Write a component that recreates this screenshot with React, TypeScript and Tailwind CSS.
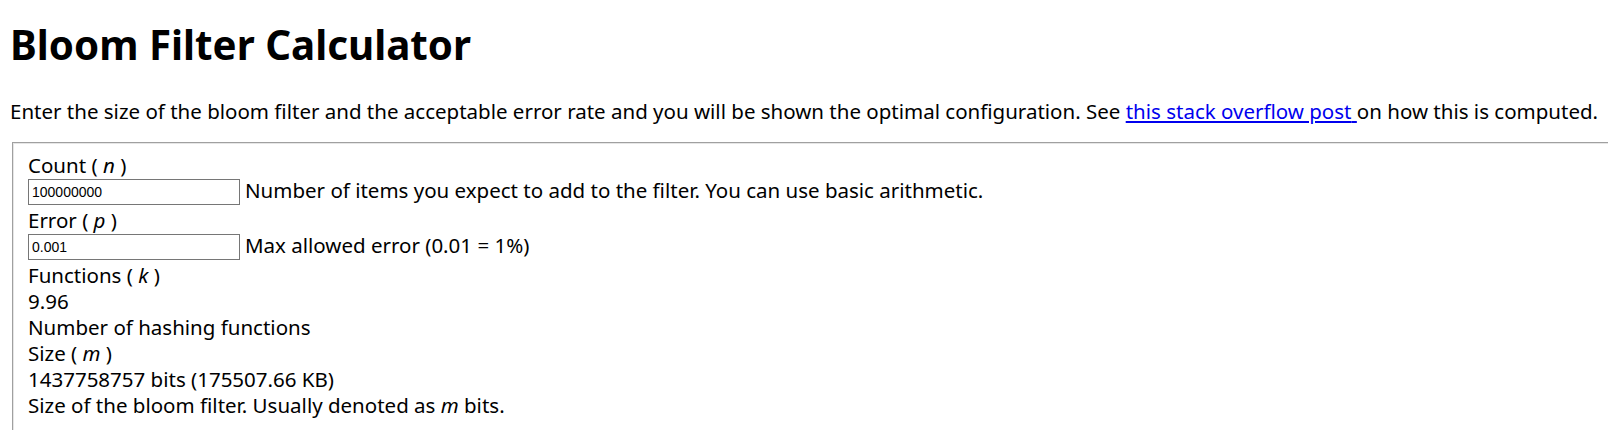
import React from "react";

function Label({ name, v }: { name: string; v: string }) {
  return (
    <div className="h-[26px] leading-[26px] whitespace-pre">
      {name} ( <i>{v}</i> )
    </div>
  );
}

function InputRow({ value, desc }: { value: string; desc: string }) {
  return (
    <div className="flex items-start h-[29px]">
      <input
        type="text"
        defaultValue={value}
        className="mt-[1px] w-[212px] h-[26px] border border-[#767676] bg-white px-[3px] text-[14px] text-black font-['Liberation_Sans',Arial,sans-serif] outline-none"
      />
      <span className="ml-[5px] leading-[25px] whitespace-nowrap">{desc}</span>
    </div>
  );
}

export default function App() {
  return (
    <div className="h-[430px] overflow-hidden bg-white text-black font-['Noto_Sans',sans-serif]">
      <h1 className="ml-[10px] mt-[21px] text-[40.3px] leading-[48px] font-bold">
        Bloom Filter Calculator
      </h1>
      <p className="ml-[10px] mt-[29px] text-[20.5px] leading-[26px] whitespace-nowrap">
        Enter the size of the bloom filter and the acceptable error rate and you will be shown the optimal
        configuration. See{" "}
        <a href="#" className="text-[#0000ee] underline">
          this stack overflow post{" "}
        </a>
        on how this is computed.
      </p>
      <div className="ml-[12px] mr-[-40px] mt-[18px] border border-[#a0a0a0]">
        <div className="border border-[#e6e6e6] pl-[14px] pt-[8px] pb-[30px] text-[20.5px] leading-[26px]">
          <Label name="Count" v="n" />
          <InputRow
            value="100000000"
            desc="Number of items you expect to add to the filter. You can use basic arithmetic."
          />
          <Label name="Error" v="p" />
          <InputRow value="0.001" desc="Max allowed error (0.01 = 1%)" />
          <Label name="Functions" v="k" />
          <div className="h-[26px]">9.96</div>
          <div className="h-[26px]">Number of hashing functions</div>
          <Label name="Size" v="m" />
          <div className="h-[26px]">1437758757 bits (175507.66 KB)</div>
          <div className="h-[26px] whitespace-pre">
            Size of the bloom filter. Usually denoted as <i>m</i> bits.
          </div>
        </div>
      </div>
    </div>
  );
}
